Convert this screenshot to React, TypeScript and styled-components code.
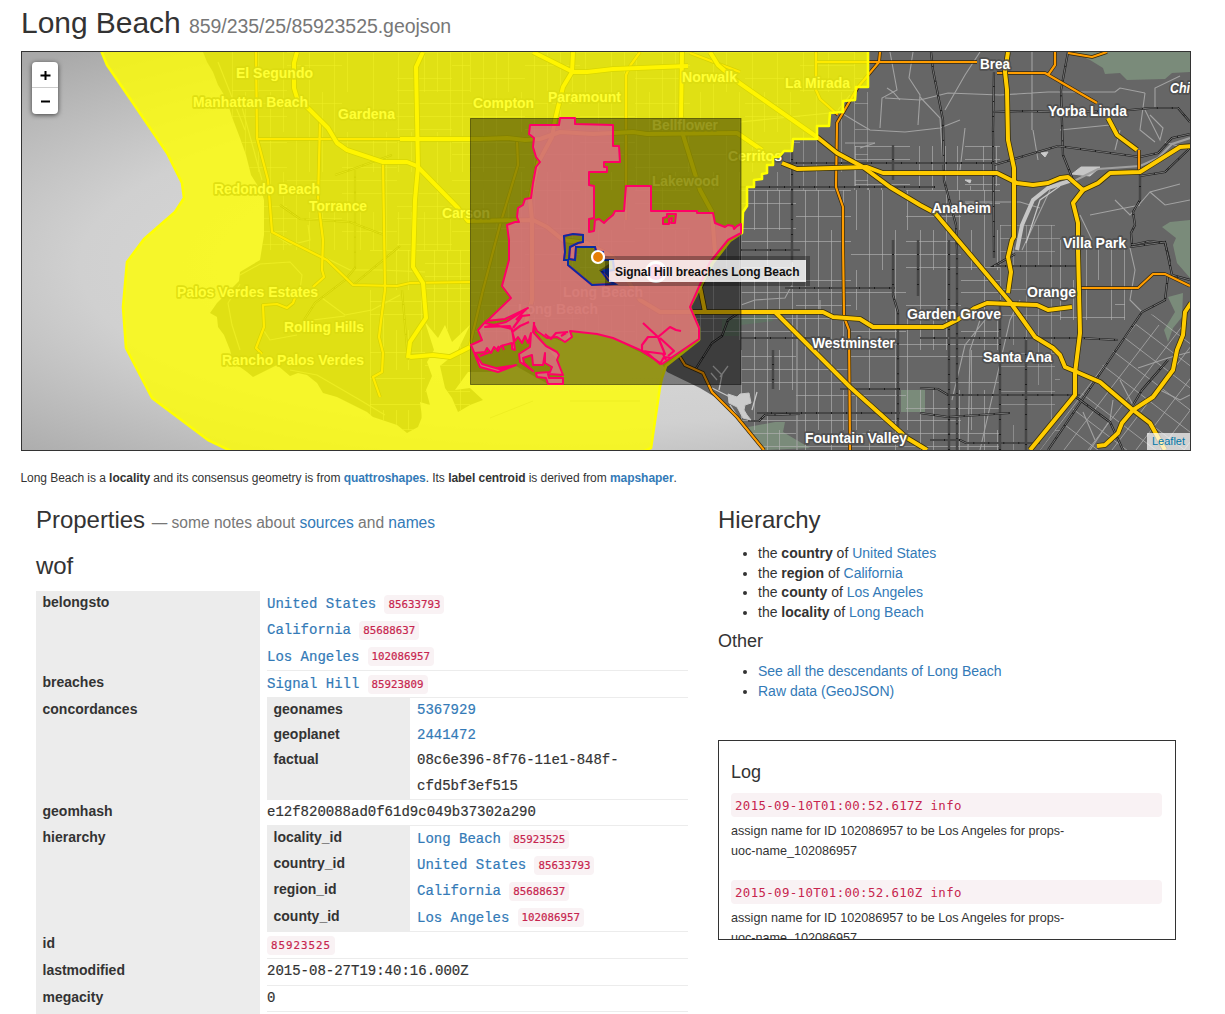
import React from "react";
import styled, { createGlobalStyle } from "styled-components";

const sans = `"Liberation Sans", Arial, sans-serif`;
const courier = `"Liberation Mono", "Courier New", monospace`;
const menlo = `"DejaVu Sans Mono", monospace`;

const Global = createGlobalStyle`
  *, *::before, *::after { box-sizing: border-box; }
  body { margin: 0; background: #fff; color: #333; font-family: ${sans}; font-size: 14px; overflow: hidden; }
`;

const Page = styled.main`
  width: 1225px;
  height: 1014px;
  overflow: hidden;
  padding: 6px 34px 0 21px;
`;

const Title = styled.h2`
  margin: 0;
  height: 45px;
  font-size: 30px;
  line-height: 33px;
  font-weight: 400;
  letter-spacing: -0.05px;
  white-space: nowrap;
`;

const Small = styled.small<{ $size?: number }>`
  font-size: ${(p) => p.$size ?? 19.5}px;
  line-height: 1;
  color: #777;
`;

const Link = styled.a<{ $bold?: boolean }>`
  color: #337ab7;
  text-decoration: none;
  font-weight: ${(p) => (p.$bold ? 700 : "inherit")};
`;

const MapFrame = styled.section`
  position: relative;
  width: 1170px;
  height: 400px;
  border: 1px solid #333;
  overflow: hidden;
  svg { display: block; }
`;

const ZoomControl = styled.div`
  position: absolute;
  left: 10px;
  top: 10px;
  width: 26px;
  border-radius: 4px;
  background: #fff;
  box-shadow: 0 1px 5px rgba(0, 0, 0, 0.65);
`;

const ZoomButton = styled.button`
  display: flex;
  align-items: center;
  justify-content: center;
  width: 26px;
  height: 26px;
  padding: 2px 0 0;
  border: 0;
  background: none;
  &:first-child { border-bottom: 1px solid #ccc; }
  &:last-child { padding-top: 0; }
`;

const Tooltip = styled.div`
  position: absolute;
  left: 587px;
  top: 208px;
  width: 197px;
  height: 22px;
  padding-left: 6px;
  background: rgba(255, 255, 255, 0.8);
  box-shadow: 0 0 0 4px rgba(0, 0, 0, 0.3);
  color: #111;
  font-size: 12px;
  font-weight: 700;
  line-height: 24px;
  white-space: nowrap;
  letter-spacing: -0.05px;
`;

const Attribution = styled.div`
  position: absolute;
  right: 0;
  bottom: 0;
  width: 43px;
  height: 17px;
  padding-left: 5px;
  background: rgba(255, 255, 255, 0.7);
  color: #0078a8;
  font-size: 11px;
  line-height: 17px;
`;

const Caption = styled.p`
  margin: 17px 0 0 -0.5px;
  font-size: 12px;
  line-height: 20px;
  letter-spacing: -0.05px;
`;

const Columns = styled.div`
  display: grid;
  grid-template-columns: 652px 458px;
  column-gap: 30px;
  padding-left: 15px;
  margin-top: 19px;
`;

const Heading = styled.h3`
  margin: 0;
  font-size: 24px;
  line-height: 26px;
  font-weight: 400;
  letter-spacing: -0.03px;
  white-space: nowrap;
`;

const GroupHeading = styled(Heading)`
  margin: 20px 0 12px;
`;

const SubHeading = styled.h4`
  margin: 0;
  font-size: 18px;
  line-height: 20px;
  font-weight: 400;
`;

const Table = styled.dl`
  margin: 0;
  display: flex;
  flex-direction: column;
`;

const Row = styled.div<{ $h: number; $label?: number }>`
  display: grid;
  grid-template-columns: ${(p) => p.$label ?? 224}px minmax(0, 1fr);
  column-gap: 7px;
  height: ${(p) => p.$h}px;
`;

const Name = styled.dt`
  background: #ececec;
  padding-left: 6.5px;
  font-family: ${sans};
  font-weight: 700;
  line-height: 23px;
  -webkit-text-stroke: 0;
`;

const Value = styled.dd<{ $line?: number; $plain?: boolean }>`
  margin: 0;
  border-bottom: ${(p) => (p.$plain ? 0 : 1)}px solid #ececec;
  font-family: ${courier};
  line-height: ${(p) => p.$line ?? 26.4}px;
  -webkit-text-stroke: 0.2px;
`;

const Line = styled.div`
  display: flex;
  align-items: center;
  gap: 8.2px;
  height: 26.4px;
`;

const Code = styled.code<{ $spaced?: boolean }>`
  display: inline-block;
  height: 19px;
  padding: 0 4px;
  border-radius: 4px;
  background: #f9f2f4;
  color: #c7254e;
  font-family: ${menlo};
  font-size: 10.8px;
  line-height: 20px;
  letter-spacing: ${(p) => (p.$spaced ? 1 : 0)}px;
`;

const List = styled.ul`
  margin: 11px 0 8px;
  padding-left: 40px;
  line-height: 19.7px;
`;

const OtherList = styled(List)`
  margin: 11px 0 10px;
`;

const Log = styled.section`
  height: 200px;
  margin-top: 39px;
  padding: 21px 13px 0 12px;
  border: 1px solid #333;
  overflow: hidden;
`;

const LogStamp = styled.code`
  display: block;
  height: 24px;
  padding: 0 4px;
  border-radius: 4px;
  background: #f9f2f4;
  color: #c7254e;
  font-family: ${menlo};
  font-size: 12.4px;
  line-height: 25px;
  letter-spacing: 0.36px;
`;

const LogText = styled.p`
  width: 344px;
  margin: 4px 0 19px;
  font-size: 12.6px;
  line-height: 20px;
`;

const LogTitle = styled(SubHeading)`
  margin-bottom: 11px;
`;

/* ---------- map drawing ---------- */

const COAST =
  "M203 52 L207 62 213 72 218 85 226 98 232 117 240 138 246 155 251 175 256 183 262 193 264 200 264 235 260 260 250 266 240 272 239 281 225 295 217 303 210 313 217 317 218 327 224 335 230 350 233 362 247 372 253 377 263 372 277 365 290 376 298 373 307 375 317 383 323 393 337 397 367 412 373 417 397 425 407 433 418 427 422 417 420 402 430 405 426 390 432 376 427 362 434 350 425 322 438 338 445 325 452 342 470 325 457 352 440 366 445 388 452 398 458 412 470 405 483 400 470 388 455 390 468 372 490 372 516 366 530 374 548 384 563 384 559 362 546 346 534 328 548 337 565 342 570 331 597 334 613 338 662 364 667 372 700 388 720 400 738 420 764 450 H1190 V52 Z";

const COUNTY =
  "M100 48 L107 65 133 103 167 153 182 183 184 198 175 212 144 239 127 262 123 307 126 348 152 398 208 440 235 453 640 453 651 448 660 387 662 378 666 366 699 340 699 328 690 307 713 263 730 241 742 233 743 212 747 206 747 187 754 187 754 180 762 179 762 174 767 173 767 165 773 165 773 157 779 157 784 151 792 151 793 139 817 139 817 126 829 126 830 113 843 112 843 101 855 100 856 87 868 87 868 48 Z";

const SIGNAL_HILL =
  "M564 236 L573 234 583 235 583 242 578 243 570 247 569 259 575 260 576 247 595 247 596 251 603 252 603 260 613 260 614 270 602 272 608 280 615 284 592 285 568 265 568 260 564 260 565 252 Z";

const LONG_BEACH =
  "M530 125 L559 125 560 118 575 118 575 124 613 125 613 146 619 146 620 162 604 162 604 167 607 167 607 172 589 172 589 185 594 186 594 218 589 219 589 232 594 231 595 220 599 219 604 223 607 220 613 215 615 211 624 211 626 186 641 186 651 186 651 211 697 211 697 213 713 213 715 223 725 227 728 225 733 226 734 229 737 226 741 224 741 233 728 240 710 262 690 307 699 328 699 339 662 364 640 350 613 338 597 334 570 331 572 337 565 342 557 337 547 338 537 331 534 325 533 332 546 346 557 352 559 355 557 360 563 375 548 374 549 378 563 378 563 384 548 384 546 378 537 377 536 373 550 372 552 367 545 363 545 353 543 365 533 365 532 355 523 358 524 363 533 371 520 362 519 354 530 347 531 333 528 343 525 336 522 343 518 337 515 341 512 331 510 326 485 327 506 322 528 308 505 319 486 321 478 330 482 340 471 345 480 367 498 372 516 365 499 369 482 364 475 353 485 352 487 348 491 353 494 347 498 351 501 346 512 343 512 349 515 350 512 329 485 323 511 298 502 286 509 260 509 240 507 225 515 222 519 222 517 217 518 208 523 205 525 199 531 198 533 183 536 167 540 162 536 157 533 147 534 138 529 134 Z";

const POND = "M667 214 L676 214 675 223 671 223 672 218 669 219 669 224 663 224 663 218 667 217 Z";

const HARBOR_LINES = [
  "M643 323 L658 337 670 327 676 330 681 331",
  "M658 337 L648 337 642 345 642 351 657 353 665 354 658 337 M660 338 L674 351 668 356",
  "M645 351 L660 364 664 357 672 358 M663 354 L666 360",
  "M513 328 L522 316 530 315 M516 320 L526 309 M512 332 L520 326 529 322",
  "M534 322 V333 M545 334 L551 339 556 333 568 332 M561 336 L566 333",
  "M480 356 L490 352 M497 349 L499 346 M502 345 L504 350 M497 368 L510 366",
];

const FREEWAYS = [
  "M710 52 L718 65 738 82 817 137 837 153 863 167 890 187 920 205 935 213 973 258 1010 302 1023 320 1035 337 1053 348 1060 355 1065 367 1077 372 1100 382 1133 410 1150 423 1165 450",
  "M400 139 H480 L507 138 525 140 540 139 560 132 593 134 633 132 647 134 737 133 762 150 M782 163 L797 169 867 167 883 173 997 173 1017 183 1033 185 1048 183 1060 178 1068 177 1083 190 1098 183 1110 173 1140 172 1180 147 1192 146",
  "M297 52 L294 63 294 88 297 98 308 108 328 128 337 143 347 150 383 162 407 162 417 166 458 208 468 221 533 220 547 227 563 240 587 243 613 257 640 300 660 312 775 312 823 312 833 317 860 319 873 327 943 327 957 320 975 308 987 303 1037 305 1048 310 1072 307",
  "M775 312 L850 387 907 438 927 450",
  "M682 52 L681 117 683 135 700 190 712 212 715 253 700 287 705 312",
  "M1008 52 L1005 72 1007 90 1008 140 1014 168 1014 237 1012 240 1008 257 1011 272 1008 293",
  "M1083 190 L1073 203 1078 223 1078 250 1080 333 1075 373 1075 395 1030 450",
  "M1108 118 L1117 135 1137 150",
  "M1191 303 L1185 312 1183 335 1177 350 1173 370 1153 397 1133 410 1122 423 1118 433 1105 445 1097 446",
  "M423 52 L416 67 418 167 415 200 413 267 423 283 426 318 410 342 408 358 M410 357 L433 355 450 357 470 347",
  "M573 52 L572 72 563 87 555 120 552 137 538 163 530 200 532 220 532 300 525 325",
  "M533 52 L573 72 587 72 613 69 688 66",
];

const HIGHWAYS = [
  "M880 52 L879 62 858 87 837 123 836 187 843 207 843 240 844 317 849 330 850 450",
  "M817 62 H977 M997 73 H1045 L1097 103 M1055 52 V65 L1048 75 M1068 53 L1092 57 1107 52",
  "M1139 150 V172 M1080 288 H1138 L1153 274 1165 274 1190 286",
  "M680 357 L685 365 703 373 712 392 737 417 764 450",
  "M256 52 L257 138 268 180 272 232 289 241 327 260 353 285 397 286 410 283 470 282",
  "M257 139 H417 M320 122 L318 200 323 240 322 270 324 277 313 287",
  "M383 162 L385 290 382 313 379 337 383 353 382 372 373 377 380 397",
  "M295 298 L293 303 287 308 277 304 263 305 264 327 256 348 262 354",
  "M640 52 L630 66 626 75 626 220 M517 140 L518 165 500 225 483 290 470 345",
  "M816 52 V90 L820 99 838 115 M690 53 L740 72",
];

const ARTERIALS = [
  "M792 145 V262 M893 145 V180 M931 52 L933 70 943 120 944 180 956 225 957 250 957 450",
  "M994 72 L993 130 994 258 M1068 52 L1061 90 1063 155 1073 180",
  "M1140 172 V200 L1133 212 1135 225 1131 233 1132 245 1150 241 1165 243 1170 262",
  "M993 112 L1020 111 1060 112 1120 111 1150 108 1178 108 1190 122 M994 165 L1058 146 1140 157",
  "M782 163 H995 M740 187 H935 M741 250 H800",
  "M1140 157 L1158 153 1172 138 1190 134 M1140 176 L1165 172 1190 148",
  "M920 338 H1080 L1118 340 M949 240 V450 M1000 300 V450 M1026 340 V450",
  "M920 388 L938 389 948 395 1080 395 M920 413 L948 417 1010 413 M930 440 H960 L966 443 H1040",
  "M785 288 H895 M741 338 H830 M840 389 H900 M757 413 H900 M1080 266 H994 L1015 254",
  "M893 240 V295 L898 312 V430 M918 240 V296 M773 350 V389",
  "M1048 450 L1142 312 1165 300 1168 275 M1076 397 L1110 422 1123 450",
  "M695 370 L712 343 722 336 728 320 740 312 M748 421 L759 421 765 415 800 414",
  "M1133 405 L1142 390 1168 360 M1130 247 L1165 242 1172 275 1190 280",
  "M280 205 L300 219 350 222 384 235 M335 175 L350 170 392 155 M353 285 L400 246",
  "M304 320 L315 303 345 280 355 268 355 170 M402 290 L408 360 M620 360 V340",
];

const MINOR = [
  "M740 122 L840 112 858 123 870 130 905 132 940 128 960 120",
  "M890 52 L897 90 882 98 880 128 M913 52 L909 78 920 95 918 125 M980 52 L965 75 945 110",
  "M885 98 L920 100 948 93 1000 95 1048 92 1090 92 1115 92 1120 88 1145 93 M1032 52 V130 M1145 93 L1140 130 1155 142",
  "M1145 110 L1160 140 1163 128 1150 115 M1155 108 V88 L1180 76 M1165 142 L1190 150",
  "M850 95 L838 110 M887 88 L893 92 900 100 M875 143 L860 148 M1040 208 L1020 202 965 202",
  "M1080 215 L1092 240 M1115 200 L1130 215 1150 192 1180 184 M1022 250 L1050 190",
  "M980 450 L1010 320 1020 300 M952 400 L965 345 985 320 M968 450 L970 350 980 320",
  "M1130 248 L1135 270 1130 300 1142 312 M1138 368 L1168 358 1190 352 M1120 380 L1133 405",
  "M741 305 L755 300 785 298 792 285 M820 300 V312 M797 312 V450",
  "M1083 412 L1095 440 M1090 450 L1110 420 1113 400 M1160 390 L1180 400 1190 395",
  "M240 275 L260 264 290 262 302 275 300 290 M240 284 L228 303 232 325 240 350 M262 328 L270 340 297 335",
  "M322 298 L345 315 372 310 400 295 M290 370 L317 375 360 400 385 415",
  "M326 258 L350 270 380 270 425 272 M275 235 L290 245 310 240 308 225",
  "M313 320 L345 316 M240 100 L262 180 M218 62 L245 130",
  "M845 143 L875 143 M920 97 L940 118 943 165 M965 128 L960 170 M1033 130 L1038 160",
  "M1090 215 L1140 205 M1150 192 L1165 205 1190 200 M1120 130 L1115 150 M1060 130 L1110 125",
];

const hash = (n: number) => {
  const v = Math.sin(n * 127.1) * 43758.5453;
  return v - Math.floor(v);
};

const gridPath = (x0: number, x1: number, y0: number, y1: number, seed: number) => {
  let d = "";
  const block = 12.8;
  for (let i = 0; x0 + i * block < x1; i++) {
    const x = Math.round(x0 + i * block) + 0.5;
    for (let j = 0; y0 + j * 40 < y1; j++) {
      if (hash(i * 31 + j * 17 + seed) > 0.36) {
        d += `M${x} ${y0 + j * 40}V${Math.min(y1, y0 + j * 40 + 40)}`;
      }
    }
  }
  for (let i = 0; y0 + i * block < y1; i++) {
    const y = Math.round(y0 + i * block) + 0.5;
    for (let j = 0; x0 + j * 55 < x1; j++) {
      if (hash(i * 13 + j * 47 + seed + 5) > 0.48) {
        d += `M${x0 + j * 55} ${y}H${Math.min(x1, x0 + j * 55 + 55)}`;
      }
    }
  }
  return d;
};

const GRIDS = [
  gridPath(232, 470, 52, 250, 3),
  gridPath(370, 470, 250, 430, 9),
  gridPath(470, 868, 52, 190, 14),
  gridPath(741, 1000, 190, 450, 21),
  gridPath(470, 741, 190, 340, 27),
  gridPath(855, 1000, 146, 190, 33),
  gridPath(1000, 1060, 225, 450, 44),
  gridPath(1060, 1125, 240, 320, 51),
];

const diagonals = () => {
  let d = "";
  for (let i = 0; i < 9; i++) {
    d += `M${1040 + i * 24} 450 l95 -125`;
    d += `M${1065 + i * 8} ${425 - i * 16} l110 84`;
  }
  return d;
};

type Label = [text: string, x: number, y: number, width: number];
const LABELS: Label[] = [
  ["El Segundo", 236, 73, 77],
  ["Manhattan Beach", 193, 102, 115],
  ["Gardena", 338, 114, 57],
  ["Compton", 473, 103, 61],
  ["Paramount", 548, 97, 73],
  ["Norwalk", 682, 77, 55],
  ["La Mirada", 785, 83, 65],
  ["Brea", 980, 64, 30],
  ["Yorba Linda", 1048, 111, 79],
  ["Bellflower", 652, 125, 66],
  ["Cerritos", 728, 156, 54],
  ["Lakewood", 652, 181, 67],
  ["Redondo Beach", 214, 189, 106],
  ["Torrance", 309, 206, 58],
  ["Carson", 442, 213, 48],
  ["Anaheim", 932, 208, 59],
  ["Villa Park", 1063, 243, 63],
  ["Palos Verdes Estates", 177, 292, 141],
  ["Rolling Hills", 284, 327, 80],
  ["Rancho Palos Verdes", 222, 360, 142],
  ["Orange", 1027, 292, 49],
  ["Garden Grove", 907, 314, 94],
  ["Santa Ana", 983, 357, 69],
  ["Westminster", 812, 343, 83],
  ["Fountain Valley", 805, 438, 102],
  ["Long Beach", 563, 292, 80],
  ["Long Beach", 518, 309, 80],
];

const MapLabel = styled.text`
  font-family: ${sans};
  font-size: 14.2px;
  font-weight: 700;
  fill: #fff;
  stroke: #4c4c4c;
  stroke-opacity: 0.85;
  stroke-width: 3.5px;
  stroke-linejoin: round;
  paint-order: stroke;
`;

const MapCanvas = () => (
  <svg width="1168" height="398" viewBox="22 52 1168 398">
    <defs>
      <radialGradient id="sea" gradientUnits="userSpaceOnUse" cx="0" cy="0" r="1" gradientTransform="translate(560 265) scale(800 270)">
        <stop offset="0" stopColor="#dedede" />
        <stop offset="0.6" stopColor="#d0d0d0" />
        <stop offset="0.85" stopColor="#b8b8b8" />
        <stop offset="1.0" stopColor="#a9a9a9" />
      </radialGradient>
      <clipPath id="land"><path d={COAST} /></clipPath>
      <clipPath id="tustin"><path d="M1142 312 L1195 325 1195 450 1040 450 Z" /></clipPath>
    </defs>
    <rect x="22" y="52" width="1168" height="398" fill="url(#sea)" />
    <path d={COAST} fill="#666" />
    <g fill="#7a8b7a">
      <path d="M1073 52 L1090 60 1103 68 1105 74 1120 73 1127 80 1165 79 1172 73 1190 72 V52 Z" />
      <path d="M1162 227 L1170 222 1190 220 V278 L1177 263 1173 245 1176 238 Z" />
      <path d="M1168 297 L1183 293 1182 317 1173 328 1168 342 1164 330 1175 312 Z" />
      <path d="M901 390 h24 v22 h-24 Z M748 427 L775 422 785 422 783 432 810 448 766 450 Z" />
      <path d="M722 318 L772 315 773 321 741 325 740 336 722 336 Z" fill="#5f7263" />
    </g>
    <g clipPath="url(#land)" fill="none">
      {GRIDS.map((d, i) => (
        <path key={i} d={d} stroke="#b2b2b2" strokeWidth="1" opacity={i % 2 ? 0.65 : 0.5} />
      ))}
      <path d={diagonals()} clipPath="url(#tustin)" stroke="#b4b4b4" strokeWidth="1" opacity="0.7" />
      {MINOR.map((d) => (
        <path key={d} d={d} stroke="#a2a2a2" strokeWidth="1.1" />
      ))}
      {ARTERIALS.map((d) => (
        <g key={d}>
          <path d={d} stroke="#1c1c1c" strokeWidth="2.2" />
          <path d={d} stroke="#999" strokeWidth="0.7" strokeDasharray="14 1" />
        </g>
      ))}
    </g>
    <g fill="none" stroke="#c6c6c6">
      <path d="M1017 250 L1022 225 1033 200 1048 188 1072 180" strokeWidth="4" />
      <path d="M1072 174 L1081 167 1100 167 1090 176 Z" fill="#c6c6c6" />
      <path d="M1072 182 L1098 169 1140 166 1158 158 1172 144 1190 138" stroke="#a0a0a0" strokeWidth="2.2" />
      <path d="M1026 243 L1040 200 1060 186" strokeWidth="1.2" />
      <path d="M728 394 L737 397 740 394 749 393 751 403 745 405 744 410 747 415 751 420 743 418 737 407 729 403 Z" fill="#ccc" />
      <path d="M713 366 L722 375 719 390 M711 373 L717 380 M728 366 L720 377 M712 388 L730 397 M730 405 L740 420 M757 392 L752 410" strokeWidth="1.3" />
      <path d="M1041 153 l7 -1 -3 5 Z M965 180 l6 0 -1 3 Z" fill="#ccc" />
    </g>
    <path d="M490 418 L533 401 M570 401 H640" stroke="#aaa" strokeWidth="1" />
    <g fill="none" strokeLinejoin="round">
      {HIGHWAYS.map((d) => (
        <path key={d} d={d} stroke="#33260a" strokeWidth="3.6" />
      ))}
      {HIGHWAYS.map((d) => (
        <path key={d + "f"} d={d} stroke="#ff9d00" strokeWidth="2.2" />
      ))}
      {FREEWAYS.map((d) => (
        <path key={d} d={d} stroke="#3a3008" strokeWidth="5.6" />
      ))}
      {FREEWAYS.map((d) => (
        <path key={d + "f"} d={d} stroke="#ffcc00" strokeWidth="4" />
      ))}
    </g>
    {LABELS.map(([text, x, y, width]) => (
      <MapLabel key={`${text}${y}`} x={x} y={y + 5} textLength={width} lengthAdjust="spacingAndGlyphs">{text}</MapLabel>
    ))}
    <MapLabel x={1170} y={93} fontStyle="italic" textLength={20} lengthAdjust="spacingAndGlyphs">Chi</MapLabel>

    <path d={COUNTY} fill="#ff0" fillOpacity="0.8" stroke="#ff0" strokeWidth="2.6" strokeLinejoin="round" />
    <rect x="470.5" y="118.5" width="270.5" height="266" fill="#000" fillOpacity="0.4" stroke="#000" strokeOpacity="0.45" />
    <path d={`${LONG_BEACH} ${SIGNAL_HILL} ${POND}`} fill="#ff69b4" fillOpacity="0.6" fillRule="evenodd" stroke="#ff0066" strokeWidth="2" strokeLinejoin="round" />
    {HARBOR_LINES.map((d) => (
      <path key={d} d={d} fill="none" stroke="#ff0066" strokeWidth="2.2" strokeLinejoin="round" />
    ))}
    <path d={SIGNAL_HILL} fill="#0a2fa0" fillOpacity="0.06" stroke="#0a2da2" strokeWidth="2" />
    <circle cx="656" cy="272" r="9.5" fill="#ef5ba1" stroke="#fff" strokeWidth="3" />
    <path d="M609 264 V277 L599 270.5 Z" fill="#000" fillOpacity="0.4" />
    <path d="M602 270 L609 268 V278 Z" fill="#0a2da2" />
    <circle cx="598" cy="257" r="6" fill="#e67e05" stroke="#fff" strokeWidth="2.2" />
  </svg>
);

type Place = [name: string, id: string];
const PlaceLine = ({ place: [name, id] }: { place: Place }) => (
  <Line>
    <Link>{name}</Link>
    <Code>{id}</Code>
  </Line>
);

const UNITED_STATES: Place = ["United States", "85633793"];
const CALIFORNIA: Place = ["California", "85688637"];
const LOS_ANGELES: Place = ["Los Angeles", "102086957"];

const PARENTS: [string, Place, number][] = [
  ["locality_id", ["Long Beach", "85923525"], 26],
  ["country_id", UNITED_STATES, 26],
  ["region_id", CALIFORNIA, 26.5],
  ["county_id", LOS_ANGELES, 26.5],
];

const ANCESTRY = [
  ["country", "United States"],
  ["region", "California"],
  ["county", "Los Angeles"],
  ["locality", "Long Beach"],
];

const LOG_TIMES = ["2015-09-10T01:00:52.617Z", "2015-09-10T01:00:52.610Z"];

export default function App() {
  return (
    <Page>
      <Global />
      <Title>
        Long Beach <Small>859/235/25/85923525.geojson</Small>
      </Title>
      <MapFrame>
        <MapCanvas />
        <ZoomControl>
          <ZoomButton aria-label="Zoom in">
            <svg width="11" height="11" viewBox="0 0 11 11"><path d="M5.5 1v9M0.5 5.5h10" stroke="#000" strokeWidth="2" /></svg>
          </ZoomButton>
          <ZoomButton aria-label="Zoom out">
            <svg width="11" height="11" viewBox="0 0 11 11"><path d="M1 5.5h9" stroke="#000" strokeWidth="2" /></svg>
          </ZoomButton>
        </ZoomControl>
        <Tooltip>Signal Hill breaches Long Beach</Tooltip>
        <Attribution>Leaflet</Attribution>
      </MapFrame>
      <Caption>
        Long Beach is a <b>locality</b> and its consensus geometry is from <Link $bold>quattroshapes</Link>. Its{" "}
        <b>label centroid</b> is derived from <Link $bold>mapshaper</Link>.
      </Caption>
      <Columns>
        <section>
          <Heading>
            Properties{" "}
            <Small $size={15.6}>
              — some notes about <Link>sources</Link> and <Link>names</Link>
            </Small>
          </Heading>
          <GroupHeading>wof</GroupHeading>
          <Table>
            <Row $h={80}>
              <Name>belongsto</Name>
              <Value>
                {[UNITED_STATES, CALIFORNIA, LOS_ANGELES].map((p) => (
                  <PlaceLine key={p[1]} place={p} />
                ))}
              </Value>
            </Row>
            <Row $h={27}>
              <Name>breaches</Name>
              <Value><PlaceLine place={["Signal Hill", "85923809"]} /></Value>
            </Row>
            <Row $h={102}>
              <Name>concordances</Name>
              <Value $line={25}>
                <Row $h={25} $label={143}><Name>geonames</Name><Value $plain $line={25}><Link>5367929</Link></Value></Row>
                <Row $h={25} $label={143}><Name>geoplanet</Name><Value $plain $line={25}><Link>2441472</Link></Value></Row>
                <Row $h={51} $label={143}><Name>factual</Name><Value $plain $line={25.8}>08c6e396-8f76-11e1-848f-<br />cfd5bf3ef515</Value></Row>
              </Value>
            </Row>
            <Row $h={26}>
              <Name>geomhash</Name>
              <Value $line={25}>e12f820088ad0f61d9c049b37302a290</Value>
            </Row>
            <Row $h={106}>
              <Name>hierarchy</Name>
              <Value>
                {PARENTS.map(([key, place, height]) => (
                  <Row key={key} $h={height} $label={143}>
                    <Name>{key}</Name>
                    <Value $plain><PlaceLine place={place} /></Value>
                  </Row>
                ))}
              </Value>
            </Row>
            <Row $h={27}>
              <Name>id</Name>
              <Value><Line><Code $spaced>85923525</Code></Line></Value>
            </Row>
            <Row $h={27}>
              <Name>lastmodified</Name>
              <Value $line={25}>2015-08-27T19:40:16.000Z</Value>
            </Row>
            <Row $h={26}>
              <Name>megacity</Name>
              <Value $line={25}>0</Value>
            </Row>
            <Row $h={26}>
              <Name />
              <Value />
            </Row>
          </Table>
        </section>
        <section>
          <Heading>Hierarchy</Heading>
          <List>
            {ANCESTRY.map(([kind, name]) => (
              <li key={kind}>the <b>{kind}</b> of <Link>{name}</Link></li>
            ))}
          </List>
          <SubHeading>Other</SubHeading>
          <OtherList>
            <li><Link>See all the descendants of Long Beach</Link></li>
            <li><Link>Raw data (GeoJSON)</Link></li>
          </OtherList>
          <Log>
            <LogTitle>Log</LogTitle>
            {LOG_TIMES.map((time) => (
              <React.Fragment key={time}>
                <LogStamp>{time} info</LogStamp>
                <LogText>assign name for ID 102086957 to be Los Angeles for props-uoc-name_102086957</LogText>
              </React.Fragment>
            ))}
          </Log>
        </section>
      </Columns>
    </Page>
  );
}
